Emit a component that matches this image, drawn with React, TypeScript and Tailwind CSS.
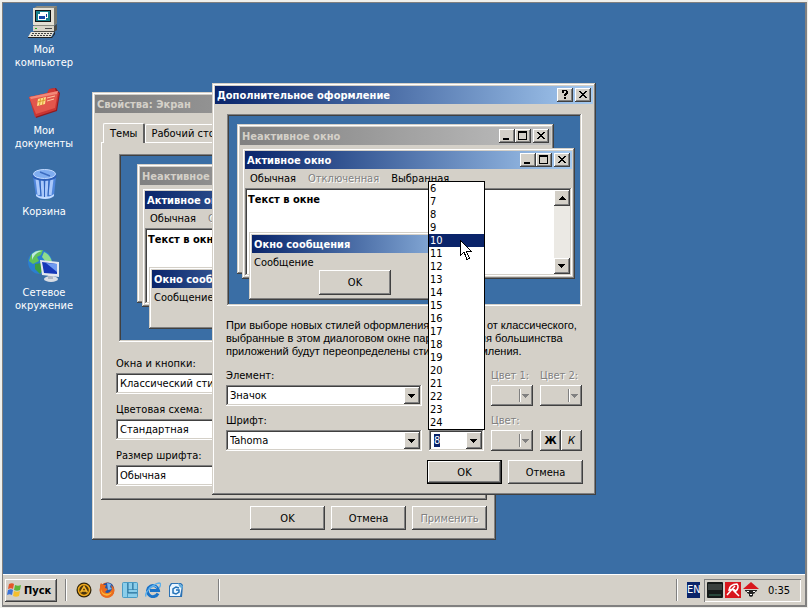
import { useEffect, useRef, type ReactNode } from "react";

const windowEdge =
  "bg-[#d4d0c8] p-[3px] shadow-[inset_-1px_-1px_0_#404040,inset_1px_1px_0_#d4d0c8,inset_-2px_-2px_0_#808080,inset_2px_2px_0_#fff]";
const raised =
  "bg-[#d4d0c8] shadow-[inset_-1px_-1px_0_#404040,inset_1px_1px_0_#fff,inset_-2px_-2px_0_#808080]";
const sunken =
  "p-[2px] shadow-[inset_-1px_-1px_0_#fff,inset_1px_1px_0_#808080,inset_-2px_-2px_0_#d4d0c8,inset_2px_2px_0_#404040]";
const disabledText = "text-[#808080] [text-shadow:1px_1px_0_#fff]";

type Glyph = "min" | "max" | "close" | "help";

const glyphNames: Record<Glyph, string> = {
  min: "Свернуть",
  max: "Развернуть",
  close: "Закрыть",
  help: "Справка",
};

function CaptionButton({ glyph }: { glyph: Glyph }) {
  return (
    <button
      aria-label={glyphNames[glyph]}
      className={`${raised} flex h-[14px] w-4 items-center justify-center ${glyph === "close" ? "ml-[2px]" : ""}`}
    >
      <svg width="12" height="10" viewBox="0 0 12 10" shapeRendering="crispEdges">
        {glyph === "min" && <path d="M2 7h6v2H2z" />}
        {glyph === "max" && <path fillRule="evenodd" d="M1 0h9v9H1zM2 2v6h7V2z" />}
        {glyph === "close" && (
          <path d="M2 1h2v1h1v1h2V2h1V1h2v1H9v1H8v1H7v1h1v1h1v1h1v1H8V7H7V6H5v1H4v1H2V7h1V6h1V5h1V4H4V3H3V2H2z" />
        )}
        {glyph === "help" && (
          <path d="M3 0h5v1h1v3H8v1H7v1H5V4h1V3h1V1H5v2H3V1h0zM5 7h2v2H5z" />
        )}
      </svg>
    </button>
  );
}

function TitleBar({ title, inactive, glyphs = [] }: { title: string; inactive?: boolean; glyphs?: Glyph[] }) {
  return (
    <div
      className={`flex h-[18px] items-center pr-[2px] pl-[2px] ${
        inactive
          ? "bg-linear-to-r from-[#808080] to-[#c0c0c0] text-[#d4d0c8]"
          : "bg-linear-to-r from-[#0a246a] to-[#a6caf0] text-white"
      }`}
    >
      <span className="flex-1 font-bold whitespace-nowrap">{title}</span>
      {glyphs.map((g) => (
        <CaptionButton key={g} glyph={g} />
      ))}
    </div>
  );
}

function DownArrow() {
  return (
    <svg width="8" height="4" viewBox="0 0 8 4" shapeRendering="crispEdges" fill="currentColor">
      <path d="M0 0h7v1H6v1H5v1H4v1H3V3H2V2H1V1H0z" />
    </svg>
  );
}

function SelectField({ id, label, value, className = "" }: { id: string; label: string; value: string; className?: string }) {
  return (
    <div className={className}>
      <label htmlFor={id} className="block">
        {label}
      </label>
      <div className={`${sunken} relative mt-[3px] bg-white`}>
        <select id={id} defaultValue={value} className="block h-[17px] w-full appearance-none bg-white pl-[2px] outline-none">
          <option>{value}</option>
        </select>
        <span className={`${raised} pointer-events-none absolute inset-y-[2px] right-[2px] flex w-4 items-center justify-center`}>
          <DownArrow />
        </span>
      </div>
    </div>
  );
}

function PushButton({ children, isDefault, disabled }: { children: ReactNode; isDefault?: boolean; disabled?: boolean }) {
  return (
    <button
      disabled={disabled}
      className={`${raised} h-6 w-[75px] ${isDefault ? "border border-black" : ""} ${disabled ? disabledText : ""}`}
    >
      {children}
    </button>
  );
}

function ColorField({ label, className = "" }: { label: string; className?: string }) {
  return (
    <div className={`${disabledText} ${className}`}>
      <span className="block whitespace-nowrap">{label}</span>
      <button disabled aria-label={label} className={`${raised} mt-[3px] flex h-[21px] w-[42px] items-center justify-end pr-[3px]`}>
        <span className="flex h-[13px] items-center border-l border-[#808080] pl-[2px] text-[#808080] shadow-[inset_1px_0_0_#fff]">
          <DownArrow />
        </span>
      </button>
    </div>
  );
}

function Preview({
  className,
  inactive,
  active,
  message,
}: {
  className: string;
  inactive: string;
  active: string;
  message: string;
}) {
  return (
    <div className={`${sunken} bg-[#3a6ea5] ${className}`}>
      <div className="relative h-full overflow-hidden">
        <div className={`${windowEdge} absolute ${inactive}`}>
          <TitleBar inactive title="Неактивное окно" glyphs={["min", "max", "close"]} />
        </div>
        <div className={`${windowEdge} absolute flex flex-col ${active}`}>
          <TitleBar title="Активное окно" glyphs={["min", "max", "close"]} />
          <div className="flex h-[19px] items-center gap-3 pl-[5px] whitespace-nowrap">
            <span>Обычная</span>
            <span className={disabledText}>Отключенная</span>
            <span>Выбранная</span>
          </div>
          <div className={`${sunken} flex flex-1 bg-white`}>
            <span className="flex-1 pt-[3px] pl-px font-bold">Текст в окне</span>
            <div className="flex w-4 flex-col justify-between bg-[#ebe9e4]">
              <button aria-label="Вверх" className={`${raised} flex h-4 items-center justify-center`}>
                <span className="rotate-180">
                  <DownArrow />
                </span>
              </button>
              <button aria-label="Вниз" className={`${raised} flex h-4 items-center justify-center`}>
                <DownArrow />
              </button>
            </div>
          </div>
        </div>
        <div className={`${windowEdge} absolute ${message}`}>
          <TitleBar title="Окно сообщения" />
          <p className="pt-[3px] pl-[2px]">Сообщение</p>
          <button className={`${raised} mt-px ml-[67px] block h-[25px] w-[72px]`}>OK</button>
        </div>
      </div>
    </div>
  );
}

const sizes = Array.from({ length: 19 }, (_, i) => i + 6);

function SizeCombo() {
  const ref = useRef<HTMLInputElement>(null);
  useEffect(() => {
    ref.current?.focus();
    ref.current?.select();
  }, []);
  return (
    <div className="relative col-start-2 self-end">
      <div className={`${sunken} flex bg-white`}>
        <input
          ref={ref}
          aria-label="Размер"
          defaultValue="8"
          className="h-[17px] w-full min-w-0 pl-[3px] caret-transparent outline-none selection:bg-[#0a246a] selection:text-white"
        />
        <button aria-label="Открыть список" className={`${raised} flex w-4 shrink-0 items-center justify-center`}>
          <DownArrow />
        </button>
      </div>
      <ul role="listbox" aria-label="Размер" className="absolute -inset-x-px bottom-full border border-black bg-white">
        {sizes.map((n) => (
          <li
            key={n}
            role="option"
            aria-selected={n === 10}
            className={`h-[13px] pl-px ${n === 10 ? "bg-[#0a246a] text-white" : ""}`}
          >
            {n}
          </li>
        ))}
      </ul>
      <svg className="absolute bottom-[190px] left-[31px]" width="13" height="21" viewBox="0 0 13 21" shapeRendering="crispEdges">
        <path d="M.5 .5v15l3.500-3.500 3 7.500 2.500-1-3-7h5z" fill="#fff" stroke="#000" />
      </svg>
    </div>
  );
}

function DisplayProperties() {
  return (
    <section className={`${windowEdge} absolute top-[89px] left-[89px] w-[404px]`}>
      <TitleBar inactive title="Свойства: Экран" glyphs={["help", "close"]} />
      <div className="px-[6px] pt-[10px] pb-[7px]">
        <div role="tablist" className="flex items-end pl-[2px]">
          <button role="tab" aria-selected="true" className="relative z-10 -mb-px h-5 rounded-t-[2px] border-t border-r-2 border-l border-t-white border-r-[#606060] border-l-white bg-[#d4d0c8] px-[6px]">
            Темы
          </button>
          <button role="tab" aria-selected="false" className="h-[18px] rounded-t-[2px] border-t border-r-2 border-l border-t-white border-r-[#606060] border-l-white px-[5px]">
            Рабочий стол
          </button>
        </div>
        <div className="px-[15px] pt-3 pb-[14px] shadow-[inset_-1px_-1px_0_#404040,inset_1px_1px_0_#fff,inset_-2px_-2px_0_#808080]">
          <Preview
            className="mx-[3px] h-[188px]"
            inactive="top-[8px] left-[16px] h-[139px] w-[300px]"
            active="top-[32px] left-[21px] h-[119px] w-[310px]"
            message="top-[111px] left-[28px] h-[62px] w-[220px]"
          />
          <div className="flex w-[204px] flex-col gap-[9px] pt-[15px]">
            <SelectField id="style" label="Окна и кнопки:" value="Классический стиль" />
            <SelectField id="scheme" label="Цветовая схема:" value="Стандартная" />
            <SelectField id="font-size" label="Размер шрифта:" value="Обычная" />
          </div>
        </div>
        <div className="flex justify-end gap-[6px] pt-[6px]">
          <PushButton>OK</PushButton>
          <PushButton>Отмена</PushButton>
          <PushButton disabled>Применить</PushButton>
        </div>
      </div>
    </section>
  );
}

function AdvancedAppearance() {
  return (
    <section className={`${windowEdge} absolute top-[80px] left-[209px] w-[384px]`}>
      <TitleBar title="Дополнительное оформление" glyphs={["help", "close"]} />
      <div className="px-[11px] pt-[10px] pb-2">
        <Preview
          className="ml-px h-[192px] w-[355px]"
          inactive="top-[8px] left-[8px] h-[150px] w-[317px]"
          active="top-[32px] left-[13px] h-[131px] w-[333px]"
          message="top-[116px] left-[20px] h-[68px] w-[232px]"
        />
        <p className="pt-[13px] font-['Liberation_Sans',sans-serif] whitespace-nowrap">
          При выборе новых стилей оформления, отличных от классического,
          <br />
          выбранные в этом диалоговом окне параметры для большинства
          <br />
          приложений будут переопределены стилем оформления.
        </p>
        <div className="grid grid-cols-[196px_55px_42px_42px] gap-x-[7px] gap-y-2 pt-[11px]">
          <SelectField id="element" label="Элемент:" value="Значок" />
          <ColorField label="Цвет 1:" className="col-start-3" />
          <ColorField label="Цвет 2:" />
          <SelectField id="font" label="Шрифт:" value="Tahoma" />
          <SizeCombo />
          <ColorField label="Цвет:" />
          <div className="flex self-end">
            <button aria-label="Полужирный" className={`${raised} h-[21px] w-[21px] font-bold`}>Ж</button>
            <button aria-label="Курсив" className={`${raised} h-[21px] w-[21px] italic`}>К</button>
          </div>
        </div>
        <div className="-mr-px flex justify-end gap-[6px] pt-[9px]">
          <PushButton isDefault>OK</PushButton>
          <PushButton>Отмена</PushButton>
        </div>
      </div>
    </section>
  );
}

function ComputerIcon() {
  return (
    <svg width="32" height="32" viewBox="0 0 32 32">
      <path d="M6 2l3-2h20v17l-3 3H6z" fill="#8a8a80" />
      <path d="M5 2h21v17H5z" fill="#e4e0d4" />
      <path d="M26 2l3-2v17l-3 2z" fill="#77776e" />
      <path d="M7 4h16v12H7z" fill="#111" />
      <path d="M8 5h14v10H8z" fill="#177e8c" />
      <path d="M12 6h8v6h-8z" fill="#fff" />
      <path d="M13 8h6v3h-6z" fill="#113a9a" />
      <path d="M10 8h8v6h-8z" fill="#fff" />
      <path d="M11 10h6v3h-6z" fill="#1746a8" />
      <path d="M6 20h20l3-2v6l-3 2H6z" fill="#4a4a46" />
      <path d="M5 20h21v5H5z" fill="#d8d4c8" />
      <path d="M17 22h7v1h-7z" fill="#444" />
      <path d="M7 22h2v1H7z" fill="#2a2" />
      <path d="M3 26h23l-3 5H0z" fill="#e8e4d8" />
      <path d="M4 27.500h20M3 29.500h20" stroke="#444" strokeDasharray="2 1" />
      <path d="M0 31h24l3-6v3l-3 4H0z" fill="#222" />
    </svg>
  );
}

function DocumentsIcon() {
  return (
    <svg width="32" height="32" viewBox="0 0 32 32">
      <path d="M3 11l17-5 2-4 6-1 2 3 2 2-3 18-21 7z" fill="#8f1a20" />
      <path d="M1 10l18-4 2-4 6-1 1 4 3 1-3 17-21 7z" fill="#c93634" />
      <path d="M1 10l29-6-3 17-19 6z" fill="#e2564c" />
      <path d="M2 10l28-6-1 3-26 5z" fill="#f28878" />
      <path d="M10 12l8-2-1 7-8 2z" fill="#ffe08a" />
      <path d="M12.500 11.500l-1 7M15.500 11l-1 7M9.500 15l8-2" stroke="#d89a30" />
      <path d="M19 11l8-2M19 14l7-2" stroke="#ffc8a0" />
    </svg>
  );
}

function BinIcon() {
  return (
    <svg width="32" height="32" viewBox="0 0 32 32">
      <path d="M5 8h23l-2 20c-3 4-15 4-18 0z" fill="#4f86dc" />
      <path d="M9 11l2 16M14 12l1 17M19 12l-1 17M24 11l-2 16" stroke="#a9c8fa" strokeWidth="3" />
      <path d="M12 12l1 16M16.500 13v16M21 12l-1 16" stroke="#2e62bc" />
      <path d="M8 26c3 4 14 4 18 0v2c-4 4-14 4-18 0z" fill="#c4dcff" />
      <ellipse cx="16.500" cy="8" rx="12" ry="5" fill="#2d5fb8" />
      <ellipse cx="16.500" cy="6" rx="11" ry="4.500" fill="#7fadf0" stroke="#c4dbff" />
      <path d="M12 4l10 4" stroke="#3c6cc0" strokeWidth="1.500" />
    </svg>
  );
}

function NetworkIcon() {
  return (
    <svg width="34" height="34" viewBox="0 0 34 34">
      <circle cx="13" cy="13" r="12" fill="#2b7fd0" />
      <path d="M4 6c5-5 9-5 12-5l-2 5-4 2 2 4-6 3-4-3z" fill="#61c25a" />
      <path d="M8 15l7-1 2 5-4 6-5-5z" fill="#3c9e42" />
      <path d="M17 3c5 2 7 6 8 10h-6l-4-5z" fill="#8fdc8c" />
      <path d="M5 5c3-3 7-4 10-3-5 1-8 4-10 9z" fill="#d4f3ff" opacity=".8" />
      <ellipse cx="24" cy="30" rx="7" ry="3" fill="#d9dde4" />
      <path d="M21 25h5v5h-5z" fill="#aeb6c4" />
      <path d="M13 11l19 2v15l-17-2z" fill="#e4e8ee" />
      <path d="M15 13l15 2v10l-13-1z" fill="#1638b8" />
      <path d="M19 14l11 1v8z" fill="#6f9bf0" />
    </svg>
  );
}

const shortcuts = [
  { icon: <ComputerIcon />, lines: ["Мой", "компьютер"] },
  { icon: <DocumentsIcon />, lines: ["Мои", "документы"] },
  { icon: <BinIcon />, lines: ["Корзина"] },
  { icon: <NetworkIcon />, lines: ["Сетевое", "окружение"] },
];

function Divider({ className = "" }: { className?: string }) {
  return <span className={`h-[22px] w-[2px] border-l border-[#808080] bg-white ${className}`} />;
}

function QuickLaunch() {
  return (
    <div className="ml-[9px] flex gap-[7px]">
      <button aria-label="AIMP">
        <svg width="16" height="16" viewBox="0 0 16 16">
          <circle cx="8" cy="8" r="7.500" fill="#33260c" />
          <circle cx="8" cy="8" r="5.500" fill="#4a3510" stroke="#f0a91c" strokeWidth="1.500" />
          <path d="M4.500 10.500L8 4.500l3.500 6M6 9h4" fill="none" stroke="#f6b52a" strokeWidth="1.500" />
        </svg>
      </button>
      <button aria-label="Firefox">
        <svg width="16" height="16" viewBox="0 0 16 16">
          <circle cx="8" cy="8" r="7.500" fill="#d9541a" />
          <circle cx="9" cy="6" r="5.500" fill="#2556a8" />
          <path d="M8 1l4 1-1 3 2 2-4 1z" fill="#7cb8ec" />
          <path d="M1 3l1-2 2 2h3L6 6l3 1-3 3c2 2 5 1 7-3l-1-4c4 3 4 8 1 11-5 4-12 1-12-5z" fill="#ea6c1e" />
          <path d="M2 6c0 5 5 8 11 4-3 6-10 4-11-1z" fill="#fbb636" />
        </svg>
      </button>
      <button aria-label="Рабочий стол">
        <svg width="16" height="16" viewBox="0 0 16 16">
          <rect width="16" height="16" rx="2" fill="#4a9bc4" />
          <path d="M1 1h4v14H1zM6 1h4v6H6zM11 1h4v6h-4zM6 8h9v2H6zM6 11h9v4H6z" fill="#8acdea" />
          <path d="M6 1v10h9M11 1v7" fill="none" stroke="#2c7198" />
        </svg>
      </button>
      <button aria-label="Internet Explorer">
        <svg width="16" height="16" viewBox="0 0 16 16">
          <path d="M13 11.500A5.500 5.500 0 1 1 13.500 8.500H5" fill="none" stroke="#1b73c8" strokeWidth="3" />
          <path d="M4 6.500a5 5 0 0 1 8-1" fill="none" stroke="#7cc6f6" />
          <path d="M1 14.500C-1 11 8 2 14 1c3 0 1 4 0 5" fill="none" stroke="#5eb0ea" strokeWidth="1.500" />
        </svg>
      </button>
      <button aria-label="Почта">
        <svg width="16" height="16" viewBox="0 0 16 16">
          <path d="M3 1h10l2 2-1 12H1V4z" fill="#2c72b4" />
          <path d="M4 2h8l2 2-2 10H2V5z" fill="#e9f5ff" />
          <path d="M11 6L8 5 5 7v4l3 1 3-2V8H8" fill="none" stroke="#2272b8" strokeWidth="1.500" />
          <path d="M10 1l5 3-1 3-3-3z" fill="#63acdc" />
        </svg>
      </button>
    </div>
  );
}

function Taskbar() {
  return (
    <footer className="flex h-[31px] items-center border-t border-white bg-[#d4d0c8] pr-1 pl-[2px]">
      <button className={`${raised} flex h-[23px] w-[52px] items-center gap-px pl-[2px] font-bold`}>
        <svg width="16" height="16" viewBox="0 0 16 16" className="shrink-0">
          <path d="M2 2c2-1 4-1 5 0L6 7C5 6 3 6 1 7z" fill="#e4562a" />
          <path d="M8 3c2 1 4 1 6 0l-1 5c-2 1-4 1-6 0z" fill="#5db63a" />
          <path d="M1 8c2-1 4-1 5 0l-1 5c-2-1-3-1-5 0z" fill="#3a73d8" />
          <path d="M7 9c2 1 4 1 6 0l-1 5c-2 1-4 1-6 0z" fill="#f5bf2c" />
        </svg>
        Пуск
      </button>
      <Divider className="ml-2" />
      <QuickLaunch />
      <Divider className="ml-[34px]" />
      <Divider className="ml-auto" />
      <span className="ml-[9px] h-4 w-[13px] overflow-hidden bg-[#0a246a] leading-4 text-white">EN</span>
      <div className="ml-1 flex h-[23px] w-[97px] items-center gap-[2px] pr-1 pl-[3px] shadow-[inset_1px_1px_0_#808080,inset_-1px_-1px_0_#fff]">
        <svg width="16" height="16" viewBox="0 0 16 16">
          <rect width="16" height="16" rx="1" fill="#151918" />
          <path d="M1 2h14v6H1z" fill="#3a403e" />
          <path d="M2 12h12v2H2z" fill="#28463a" />
        </svg>
        <svg width="16" height="16" viewBox="0 0 16 16">
          <path d="M0 0h16v16H0z" fill="#d8161c" />
          <path d="M2 13L10 4M8 8l6 6M4 8c0-3 3-6 8-6 2 2 1 5-1 7-2-2-5-2-7-1z" fill="none" stroke="#fff" strokeWidth="1.500" />
        </svg>
        <svg width="16" height="16" viewBox="0 0 16 16">
          <path d="M8 0l8 7H0z" fill="#d8161c" />
          <path d="M2 8h12v1l-2 1v1l-2 1v2l-2 1-2-1v-2l-2-1v-1L2 9z" fill="#222" />
          <path d="M4 9h2v1H4zM10 9h2v1h-2zM7 12h2v1H7z" fill="#fff" />
        </svg>
        <time className="flex-1 text-center">0:35</time>
      </div>
    </footer>
  );
}

export default function App() {
  return (
    <div className="flex h-screen flex-col border-t-2 border-r border-b border-l-2 border-[#f0f0ec] bg-[#808080] pt-px pr-[2px] pb-[2px] pl-px font-['DejaVu_Sans_Condensed','DejaVu_Sans',sans-serif] text-[11px] leading-[13px] text-black">
      <main className="relative flex-1 overflow-hidden bg-[#3a6ea5]">
        <nav className="flex w-[82px] flex-col pt-[3px]">
          {shortcuts.map((s) => (
            <a key={s.lines[0]} href="#" className="flex h-[81px] flex-col items-center gap-[4px] text-center text-white">
              <span className="h-[33px]">{s.icon}</span>
              <span>
                {s.lines.map((l) => (
                  <span key={l} className="block">
                    {l}
                  </span>
                ))}
              </span>
            </a>
          ))}
        </nav>
        <DisplayProperties />
        <AdvancedAppearance />
      </main>
      <Taskbar />
    </div>
  );
}
